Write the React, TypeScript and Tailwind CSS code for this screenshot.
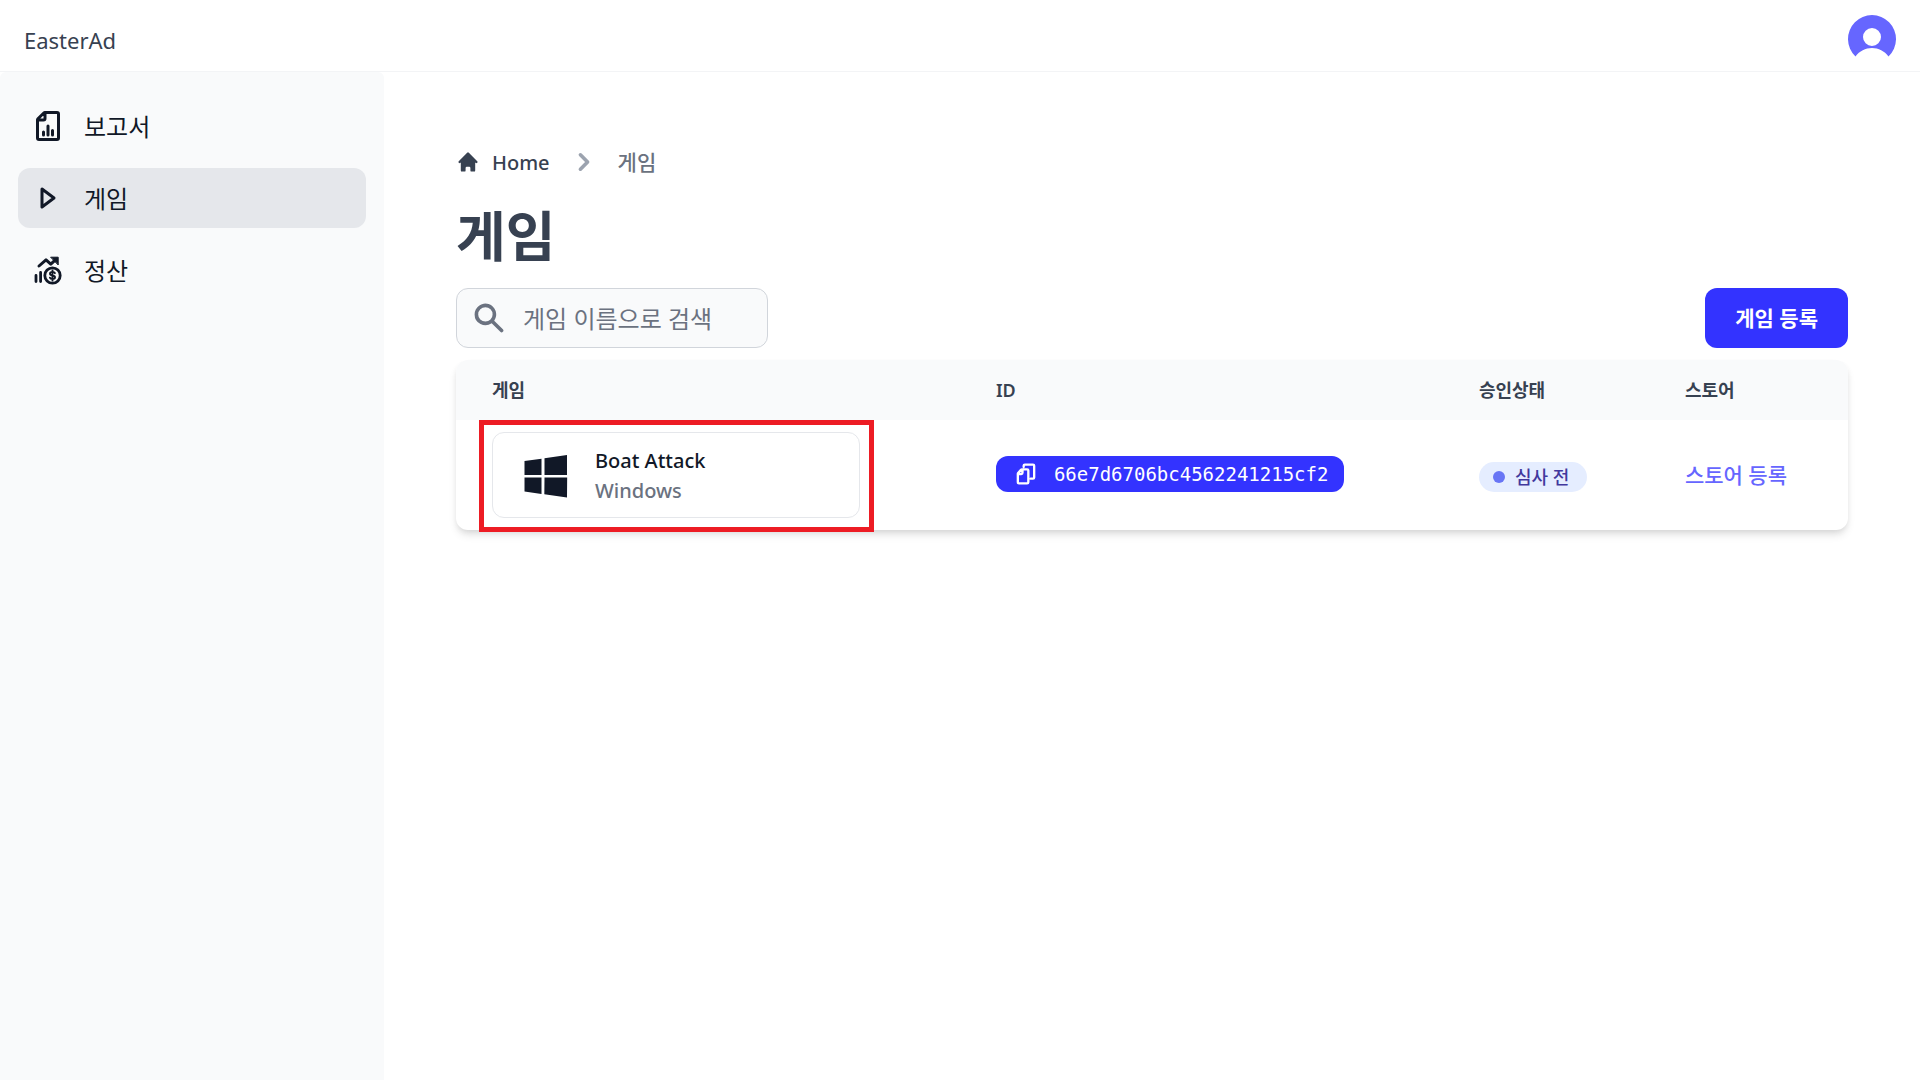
import type { ReactNode } from 'react';

function OutlineIcon({ d, className }: { d: string; className: string }) {
  return (
    <svg
      viewBox="0 0 24 24"
      fill="none"
      stroke="currentColor"
      strokeWidth={2}
      strokeLinecap="round"
      strokeLinejoin="round"
      aria-hidden="true"
      className={className}
    >
      <path d={d} />
    </svg>
  );
}

const fileChart =
  'M10 3v4a1 1 0 0 1-1 1H5m4 10v-2m3 2v-6m3 6v-3m4-11v16a1 1 0 0 1-1 1H6a1 1 0 0 1-1-1V7.914a1 1 0 0 1 .293-.707l3.914-3.914A1 1 0 0 1 9.914 3H18a1 1 0 0 1 1 1Z';
const play = 'M8 18V6l8 6-8 6Z';
const fileCopy =
  'M9 8v3a1 1 0 0 1-1 1H5m11 4h2a1 1 0 0 0 1-1V5a1 1 0 0 0-1-1h-7a1 1 0 0 0-1 1v1m4 3v10a1 1 0 0 1-1 1H6a1 1 0 0 1-1-1v-7.13a1 1 0 0 1 .24-.65L7.7 8.35A1 1 0 0 1 8.46 8H13a1 1 0 0 1 1 1Z';

function FinanceIcon() {
  return (
    <svg
      viewBox="0 0 36 36"
      fill="none"
      stroke="currentColor"
      strokeWidth={3}
      strokeLinecap="round"
      strokeLinejoin="round"
      aria-hidden="true"
      className="size-9"
    >
      <path d="M6 23.5v6M10.600 20.5v9" strokeWidth={2.8} />
      <path d="M9 14l7-6.200 4.800 4.400 5.400-5" />
      <path d="M21 5.200h7.200v7.400z" fill="currentColor" strokeWidth={1} />
      <circle cx="22.500" cy="23.500" r="7.700" strokeWidth={2.8} />
      <path
        d="M24.900 21.200c-.4-1-1.300-1.300-2.400-1.300-1.400 0-2.500.6-2.500 1.800 0 2.400 5 1.200 5 3.600 0 1.200-1.100 1.800-2.500 1.800-1.200 0-2.200-.4-2.600-1.400M22.500 18.400v10.200"
        strokeWidth={1.9}
      />
    </svg>
  );
}

function NavItem({ icon, label, active }: { icon: ReactNode; label: string; active?: boolean }) {
  return (
    <li>
      <a
        href="#"
        aria-current={active ? 'page' : undefined}
        className={
          active
            ? 'flex h-15 items-center gap-4.5 rounded-xl bg-[#e5e7eb] px-3'
            : 'flex h-15 items-center gap-4.5 rounded-xl px-3'
        }
      >
        {icon}
        <span className="pt-0.5">{label}</span>
      </a>
    </li>
  );
}

export default function App() {
  return (
    <div className="flex min-h-screen flex-col bg-white font-['Noto_Sans','Noto_Sans_CJK_KR',sans-serif] text-[#111827]">
      <header className="flex h-18 items-center justify-between border-b border-[#f3f4f6] px-6">
        <a href="#" className="pt-2 text-[22px] leading-8 text-[#374151]">
          EasterAd
        </a>
        <button type="button" aria-label="Account" className="mt-1.5">
          <svg viewBox="0 0 48 48" className="size-12">
            <path
              fill="#6666ff"
              fillRule="evenodd"
              d="M7.5 41.5A24 24 0 1 1 40.5 41.5C36.5 36 30.500 33 24 33S11.500 36 7.500 41.500ZM24 31A9 9 0 1 0 24 13 9 9 0 0 0 24 31Z"
            />
          </svg>
        </button>
      </header>

      <div className="flex grow">
        <nav aria-label="Sidebar" className="w-96 shrink-0 rounded-t-md bg-[#f9fafb] px-4.5 py-6 text-2xl">
          <ul className="flex flex-col gap-3">
            <NavItem icon={<OutlineIcon d={fileChart} className="size-9" />} label="보고서" />
            <NavItem icon={<OutlineIcon d={play} className="size-9" />} label="게임" active />
            <NavItem icon={<FinanceIcon />} label="정산" />
          </ul>
        </nav>

        <main className="min-w-0 grow px-18 pt-18">
          <nav aria-label="Breadcrumb">
            <ol className="flex h-9 items-center font-medium">
              <li>
                <a href="#" className="flex items-center gap-3 text-xl text-[#374151]">
                  <svg viewBox="0 0 20 20" fill="currentColor" aria-hidden="true" className="size-6">
                    <path d="M10.707 2.293a1 1 0 0 0-1.414 0l-7 7a1 1 0 0 0 1.414 1.414L4 10.414V17a1 1 0 0 0 1 1h2a1 1 0 0 0 1-1v-2a1 1 0 0 1 1-1h2a1 1 0 0 1 1 1v2a1 1 0 0 0 1 1h2a1 1 0 0 0 1-1v-6.586l.293.293a1 1 0 0 0 1.414-1.414l-7-7z" />
                  </svg>
                  <span className="pt-0.5">Home</span>
                </a>
              </li>
              <li className="flex items-center text-[21px] text-[#6b7280]">
                <svg viewBox="0 0 20 20" fill="#9ca3af" aria-hidden="true" className="mx-4 size-9">
                  <path d="M7.293 14.707a1 1 0 0 1 0-1.414L10.586 10 7.293 6.707a1 1 0 0 1 1.414-1.414l4 4a1 1 0 0 1 0 1.414l-4 4a1 1 0 0 1-1.414 0z" />
                </svg>
                <span className="pt-0.5">게임</span>
              </li>
            </ol>
          </nav>

          <h1 className="mt-6 pt-0.5 text-[54px] leading-15 font-bold text-[#374151]">게임</h1>

          <div className="mt-5.5 flex items-center justify-between">
            <label className="flex h-15 w-78 items-center gap-4 rounded-xl border border-[#d1d5db] bg-[#f9fafb] pl-3.5">
              <svg viewBox="0 0 20 20" fill="#6b7280" aria-hidden="true" className="size-9 shrink-0">
                <path
                  fillRule="evenodd"
                  d="M8 4a4 4 0 1 0 0 8 4 4 0 0 0 0-8zM2 8a6 6 0 1 1 10.890 3.476l4.817 4.817a1 1 0 0 1-1.414 1.414l-4.816-4.816A6 6 0 0 1 2 8z"
                />
              </svg>
              <input
                type="text"
                aria-label="게임 이름으로 검색"
                placeholder="게임 이름으로 검색"
                className="w-full min-w-0 bg-transparent pt-0.5 text-2xl outline-none placeholder:text-[#6b7280]"
              />
            </label>
            <button
              type="button"
              className="h-15 rounded-xl bg-[#3333ff] px-7.5 pt-0.5 text-[21px] font-semibold text-white"
            >
              게임 등록
            </button>
          </div>

          <div className="mt-3 rounded-xl shadow-[0_6px_9px_-1px_rgb(0_0_0/0.1),0_3px_6px_-2px_rgb(0_0_0/0.1)]">
            <table className="w-full table-fixed text-left">
              <colgroup>
                <col className="w-[36.2%]" />
                <col className="w-[34.7%]" />
                <col className="w-[14.8%]" />
                <col className="w-[14.3%]" />
              </colgroup>
              <thead className="h-15 bg-[#f9fafb] text-lg leading-6 text-[#374151]">
                <tr>
                  <th className="rounded-tl-xl px-9 font-semibold">게임</th>
                  <th className="px-9 font-semibold">ID</th>
                  <th className="px-9 font-semibold">승인상태</th>
                  <th className="rounded-tr-xl px-9 font-semibold">스토어</th>
                </tr>
              </thead>
              <tbody>
                <tr className="h-[110px]">
                  <td className="px-9">
                    <div className="relative w-92">
                      <a href="#" className="flex h-[86px] items-center rounded-xl border border-[#e5e7eb] pl-6">
                        <svg viewBox="0 0 24 24" fill="currentColor" aria-hidden="true" className="size-15">
                          <path d="M3.005 12 3 6.408l6.800-.923v6.517H3.005ZM11 5.320 19.997 4v8H11V5.320ZM20.067 13l-.069 8-9.065-1.275L11 13h9.067ZM9.800 19.580l-6.795-.931V13H9.800v6.580Z" />
                        </svg>
                        <span className="ml-4.5 flex flex-col pt-0.5 text-xl leading-7.5 font-medium">
                          <span>Boat Attack</span>
                          <span className="text-[#6b7280]">Windows</span>
                        </span>
                      </a>
                      <div className="pointer-events-none absolute -top-3 -right-3.5 -bottom-3.5 -left-[13px] border-5 border-[#ed1c24]" />
                    </div>
                  </td>
                  <td className="px-9">
                    <button
                      type="button"
                      className="mb-0.5 flex h-9 items-center gap-3.5 rounded-xl bg-[#3333ff] px-4 font-['DejaVu_Sans_Mono',monospace] text-[19px] text-white"
                    >
                      <OutlineIcon d={fileCopy} className="size-7" />
                      66e7d6706bc4562241215cf2
                    </button>
                  </td>
                  <td className="px-9">
                    <span className="mt-1 flex h-7.5 w-27 items-center gap-2.5 rounded-full bg-[#e5edff] pl-3.5 text-lg font-medium text-[#42389d]">
                      <span className="size-3 rounded-full bg-[#6875f5]" />
                      심사 전
                    </span>
                  </td>
                  <td className="px-9 pt-0.5 text-[21px]">
                    <a href="#" className="font-medium text-[#6666ff]">
                      스토어 등록
                    </a>
                  </td>
                </tr>
              </tbody>
            </table>
          </div>
        </main>
      </div>
    </div>
  );
}
